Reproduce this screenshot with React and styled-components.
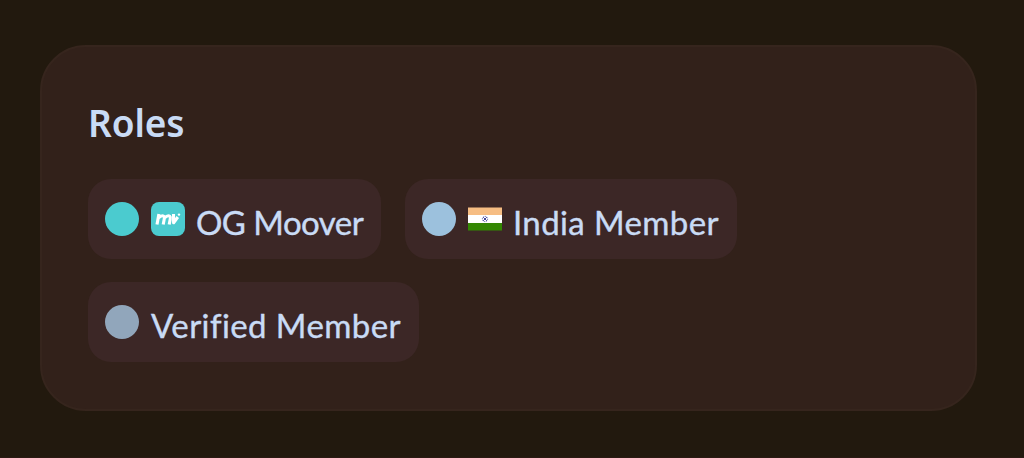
import React from 'react'
import styled, { createGlobalStyle } from 'styled-components'

const GlobalStyle = createGlobalStyle`
  * {
    box-sizing: border-box;
  }
  body {
    margin: 0;
    background: #22190e;
    font-family: "Noto Sans", sans-serif;
    color: #c9dbf5;
  }
`;

const Page = styled.main`
  height: 458px;
  padding: 45px 47px 0 40px;
  border-bottom: 1px solid #2a1a13;
`;

const Card = styled.section`
  height: 366px;
  padding: 48px 46px;
  background: #32211a;
  border: 2px solid #36251d;
  border-radius: 46px;
`;

const Title = styled.h2`
  margin: 0 0 28px;
  height: 56px;
  line-height: 56px;
  font-size: 37px;
  font-weight: 600;
  letter-spacing: -0.1px;
`;

const RoleList = styled.div`
  display: flex;
  flex-wrap: wrap;
  gap: 23px 24px;
`;

const Role = styled.div`
  display: flex;
  align-items: center;
  width: ${(props) => props.$width}px;
  height: 80px;
  padding-left: 17px;
  background: #3c2726;
  border-radius: 23px;
`;

const Dot = styled.span`
  flex: none;
  width: 34px;
  height: 34px;
  margin-right: 12px;
  border-radius: 50%;
  background: ${(props) => props.$color};
`;

const Icon = styled.svg`
  flex: none;
  width: 34px;
  height: 34px;
  margin-right: 11px;
`;

const Name = styled.span`
  padding-top: 6px;
  font-family: Lato, "Noto Sans", sans-serif;
  font-size: 33px;
  line-height: 40px;
  white-space: nowrap;
  letter-spacing: ${(props) => props.$spacing}px;
  -webkit-text-stroke: 0.4px currentColor;
`;

const MooverIcon = () => (
  <Icon viewBox="0 0 34 34">
    <rect width="34" height="34" rx="8" fill="#4bcbcf" />
    <g fill="none" stroke="#fff" strokeWidth="3.1" strokeLinejoin="round">
      <path d="M6 22.5 7.9 12M7.5 16q3.2-3.2 5.2-1.8 1 .8.5 3L12.2 22.5M13.5 16q3.2-3.2 5.2-1.8 1 .8.5 3L18.2 22.5" />
      <path d="M22.5 12 22.6 20.8 26.8 15" />
    </g>
    <circle cx="28" cy="12.6" r="1.2" fill="#fff" />
  </Icon>
);

const IndiaIcon = () => (
  <Icon viewBox="0 0 34 34">
    <path d="M0 5.5h34V13H0z" fill="#f6bd83" />
    <path d="M0 13h34v8H0z" fill="#fff" />
    <path d="M0 21h34v7.5H0z" fill="#338702" />
    <circle cx="17" cy="17" r="2.6" fill="none" stroke="#6264ad" strokeWidth="1" strokeDasharray="1.2 .8" />
    <path d="m15 15 4 4m0-4-4 4" stroke="#4d50a2" strokeWidth=".9" />
    <circle cx="17" cy="17" r=".9" fill="#35388f" />
  </Icon>
);

const roles = [
  { name: 'OG Moover', color: '#4bcbcf', width: 293, spacing: -0.55, icon: <MooverIcon /> },
  { name: 'India Member', color: '#9cc1dd', width: 332, spacing: 0.38, icon: <IndiaIcon /> },
  { name: 'Verified Member', color: '#91a6bb', width: 331, spacing: 0.42 },
];

const App = () => (
  <>
    <GlobalStyle />
    <Page>
      <Card>
        <Title>Roles</Title>
        <RoleList>
          {roles.map(({ name, color, width, spacing, icon }) => (
            <Role key={name} $width={width}>
              <Dot $color={color} />
              {icon}
              <Name $spacing={spacing}>{name}</Name>
            </Role>
          ))}
        </RoleList>
      </Card>
    </Page>
  </>
)

export default App
